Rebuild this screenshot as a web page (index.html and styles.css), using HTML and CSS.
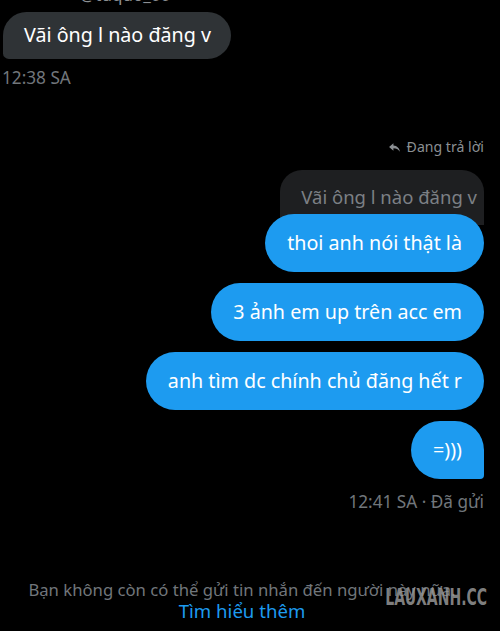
FILE: index.html
```html
<!DOCTYPE html>
<html lang="vi">
<head>
<meta charset="utf-8">
<link rel="stylesheet" href="styles.css">
</head>
<body>
<div class="chat">
  <div class="handle">@tuquo_00</div>
  <div class="recv-row">
    <div class="bubble recv">Vãi ông l nào đăng v</div>
  </div>
  <div class="time left">12:38 SA</div>

  <div class="replying">
    <svg class="reply-icon" viewBox="0 0 24 24" width="13" height="13"><path d="M10 4 2 11l8 7v-4.5c5.5 0 9 1.8 12 6.5-1-6.5-5-11-12-11.5V4z" fill="currentColor"/></svg>
    <span>Đang trả lời</span>
  </div>
  <div class="thread">
    <div class="quote">Vãi ông l nào đăng v</div>
    <div class="bubble sent">thoi anh nói thật là</div>
    <div class="bubble sent">3 ảnh em up trên acc em</div>
    <div class="bubble sent">anh tìm dc chính chủ đăng hết r</div>
    <div class="bubble sent last">=)))</div>
  </div>
  <div class="time right">12:41 SA · Đã gửi</div>

  <div class="footer">
    <p class="notice">Bạn không còn có thể gửi tin nhắn đến người này nữa.</p>
    <a class="learn">Tìm hiểu thêm</a>
    <span class="watermark">LAUXANH.CC</span>
  </div>
</div>
</body>
</html>
```
FILE: styles.css
```css
html, body {
  margin: 0;
  padding: 0;
  background: #000;
}
body {
  width: 500px;
  height: 631px;
  overflow: hidden;
  font-family: "Noto Sans", "Open Sans", sans-serif;
  color: #e7e9ea;
}
.chat {
  display: flex;
  flex-direction: column;
}
.handle {
  margin-top: -16px;
  height: 22px;
  padding-left: 80px;
  font-size: 17px;
  color: #8b8f93;
  line-height: 22px;
}
.recv-row {
  display: flex;
  padding-left: 3px;
  margin-top: 6px;
}
.bubble {
  font-size: 19.7px;
  line-height: 26px;
  color: #fff;
  white-space: nowrap;
}
.recv {
  background: #2f3336;
  padding: 10px 20px 11px 21px;
  border-radius: 24px 24px 24px 6px;
}
.time {
  font-size: 17.2px;
  color: #71767b;
  line-height: 22px;
}
.time.left {
  margin-top: 8px;
  padding-left: 2px;
}
.replying {
  display: flex;
  align-items: center;
  justify-content: flex-end;
  gap: 6px;
  padding-right: 16px;
  margin-top: 49px;
  font-size: 14.1px;
  color: #8b8f93;
  line-height: 18px;
}
.reply-icon {
  color: #8b8f93;
}
.thread {
  display: flex;
  flex-direction: column;
  align-items: flex-end;
  gap: 11px;
  padding-right: 16px;
  margin-top: 14px;
}
.quote {
  background: #1e1f21;
  color: #7c8085;
  font-size: 18.5px;
  line-height: 24px;
  padding: 15px 7px 16px 21px;
  border-radius: 22px 22px 0 0;
  margin-bottom: -22px;
  white-space: nowrap;
}
.sent {
  position: relative;
  background: #1d9bf0;
  padding: 16px 22px;
  border-radius: 29px;
}
.sent.last {
  border-radius: 29px 29px 4px 29px;
}
.time.right {
  text-align: right;
  padding-right: 16px;
  margin-top: 12px;
}
.footer {
  position: relative;
  margin-top: 66px;
  padding-right: 16px;
  text-align: center;
}
.notice {
  margin: 0;
  font-size: 16.7px;
  line-height: 21px;
  color: #71767b;
}
.learn {
  display: block;
  font-size: 18.6px;
  line-height: 22px;
  color: #1d9bf0;
}
.watermark {
  position: absolute;
  right: 13px;
  top: 6px;
  font-family: "DejaVu Sans Condensed", "DejaVu Sans", sans-serif;
  font-weight: bold;
  font-size: 19px;
  color: rgba(150, 150, 150, 0.85);
  transform: scale(0.82, 1.25);
  transform-origin: right center;
}
```
